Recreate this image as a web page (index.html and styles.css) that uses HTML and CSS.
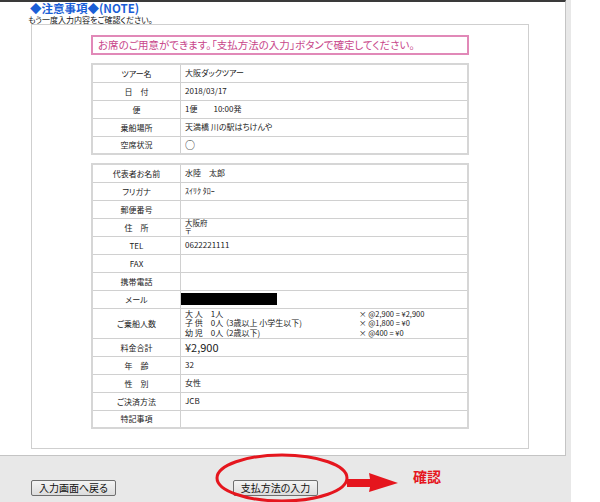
FILE: index.html
```html
<!DOCTYPE html>
<html lang="ja">
<head>
  <meta charset="UTF-8">
  <title>ご予約内容の確認</title>
  <link rel="stylesheet" href="styles.css">
</head>
<body>

  <div class="page">
    <div class="sheet">
      <h1 class="note-title">◆注意事項◆(NOTE)</h1>
      <p class="note-sub">もう一度入力内容をご確認ください。</p>

      <div class="confirm-box">
        <div class="notice">お席のご用意ができます。「支払方法の入力」ボタンで確定してください。</div>

        <!-- tour -->
        <table class="info">
          <tr><th>ツアー名</th><td>大阪ダックツアー</td></tr>
          <tr><th>日　付</th><td>2018/03/17</td></tr>
          <tr><th>便</th><td>1便　　10:00発</td></tr>
          <tr><th>乗船場所</th><td>天満橋 川の駅はちけんや</td></tr>
          <tr><th>空席状況</th><td class="seat">○</td></tr>
        </table>

        <!-- customer -->
        <table class="info">
          <tr><th>代表者お名前</th><td>水陸　太郎</td></tr>
          <tr><th>フリガナ</th><td>ｽｲﾘｸ ﾀﾛｰ</td></tr>
          <tr><th>郵便番号</th><td></td></tr>
          <tr><th>住　所</th><td class="two-line">大阪府<br>〒</td></tr>
          <tr><th>TEL</th><td>0622221111</td></tr>
          <tr><th>FAX</th><td></td></tr>
          <tr><th>携帯電話</th><td></td></tr>
          <tr><th>メール</th><td class="redacted"><span class="black-bar"></span></td></tr>
          <tr class="tall">
            <th>ご乗船人数</th>
            <td>
              <div class="people">
                <div class="people-count">
                  大 人　1人<br>
                  子 供　0人 （3歳以上 小学生以下)<br>
                  幼 児　0人 （2歳以下)
                </div>
                <div class="people-price">
                  × @2,900 = ¥2,900<br>
                  × @1,800 = ¥0<br>
                  × @400 = ¥0
                </div>
              </div>
            </td>
          </tr>
          <tr><th>料金合計</th><td class="total">¥2,900</td></tr>
          <tr><th>年　齢</th><td>32</td></tr>
          <tr><th>性　別</th><td>女性</td></tr>
          <tr><th>ご決済方法</th><td>JCB</td></tr>
          <tr><th>特記事項</th><td></td></tr>
        </table>
      </div>
    </div>

    <div class="footer">
      <button class="btn btn-back">入力画面へ戻る</button>
      <span class="circled">
        <button class="btn">支払方法の入力</button>
        <svg class="ring" width="140" height="52" viewBox="0 0 140 52">
          <ellipse cx="70" cy="26" rx="65" ry="23" fill="none" stroke="#e5161e" stroke-width="3"/>
        </svg>
      </span>
      <svg class="arrow" width="52" height="20" viewBox="0 0 52 20">
        <polygon points="0,6 23,6 22,0 51,10 22,19 23,14 0,14" fill="#e5161e"/>
      </svg>
      <span class="mark">確認</span>
    </div>
  </div>

</body>
</html>
```

FILE: styles.css
```css
body {
  margin: 0;
  background-color: #fff;
  font-family: "Noto Sans CJK JP", "Liberation Sans", sans-serif;
  font-feature-settings: "palt";
  color: #222;
}

.page {
  width: 571px;
  background-color: #e8e8e8;
}

.sheet {
  width: 566px;
  height: 456px;
  box-sizing: border-box;
  background-color: #fff;
  border-top: 2px solid #3a3a3a;
  border-right: 1px solid #c4c4c4;
  border-bottom: 1px solid #c4c4c4;
}

.note-title {
  margin: 0 0 0 30px;
  font-size: 11.5px;
  line-height: 13px;
  font-weight: bold;
  color: #1a5ed6;
}

.note-sub {
  margin: 0 0 0 28px;
  font-size: 8px;
  line-height: 9px;
  color: #111;
}

.confirm-box {
  margin: 0 0 0 31px;
  width: 498px;
  box-sizing: border-box;
  border: 1px solid #cfcfcf;
  padding: 10px 59px 19px;
}

.notice {
  border: 2px solid #e189b8;
  height: 20px;
  box-sizing: border-box;
  padding-left: 5px;
  font-size: 10.5px;
  line-height: 16px;
  color: #c8468a;
}

.info {
  width: 378px;
  border-collapse: collapse;
  border: 2px solid #d6d6d6;
  margin-top: 8px;
  font-size: 8px;
}

.info tr {
  height: 18px;
}

.info th {
  width: 87px;
  font-weight: normal;
  text-align: center;
  border: 1px solid #d0d0d0;
  padding: 0;
}

.info td {
  border: 1px solid #d0d0d0;
  padding: 0 0 0 4px;
  line-height: 1;
}

.info td.seat {
  font-size: 10px;
}

.info td.two-line {
  font-size: 7.5px;
  line-height: 8.5px;
}

.info td.redacted {
  padding-left: 0;
}

.black-bar {
  display: block;
  width: 96px;
  height: 12px;
  background-color: #000;
}

.info tr.tall {
  height: 30px;
}

.people {
  display: flex;
  font-size: 8px;
  line-height: 9.5px;
}

.people-count {
  width: 174px;
}

.people-price {
  font-size: 7.5px;
}

.info td.total {
  font-size: 11px;
}

.footer {
  display: flex;
  align-items: flex-start;
  height: 46px;
}

.btn {
  width: 85px;
  height: 16px;
  margin: 24px 0 0;
  padding: 0;
  font-family: "Noto Sans CJK JP", sans-serif;
  font-feature-settings: "palt";
  font-size: 10px;
  line-height: 12px;
  color: #111;
  background: linear-gradient(#f4f4f4, #dcdcdc);
  border: 1px solid #6e6e6e;
  border-radius: 2px;
}

.btn-back {
  margin-left: 31px;
}

.circled {
  position: relative;
  margin-left: 117px;
}

.ring {
  position: absolute;
  left: -21px;
  top: -4px;
}

.arrow {
  margin: 17px 0 0 29px;
}

.mark {
  margin: 12px 0 0 14px;
  font-size: 14px;
  line-height: 16px;
  font-weight: bold;
  color: #e5161e;
}
```
